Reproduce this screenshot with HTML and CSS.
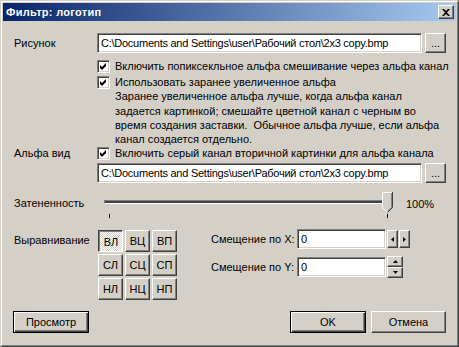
FILE: index.html
```html
<!DOCTYPE html>
<html>
	<head>
		<meta charset="UTF-8">
		<title>Фильтр: логотип</title>
		<link rel="stylesheet" href="styles.css">
	</head>
	<body>
		<div class="window">
			<div class="frame">
				<div class="titlebar">
					<span class="title">Фильтр: логотип</span>
					<span class="close">
						<svg width="8" height="7" viewBox="0 0 8 7"><path d="M0 0h2l2 2 2-2h2l-3 3.5 3 3.5h-2l-2-2-2 2h-2l3-3.5z"/></svg>
					</span>
				</div>

				<div class="content">
					<!-- рисунок -->
					<div class="row">
						<span class="label">Рисунок</span>
						<div class="edit path">C:\Documents and Settings\user\Рабочий стол\2x3 copy.bmp</div>
						<span class="btn browse">...</span>
					</div>

					<div class="check-row first">
						<span class="label"></span>
						<span class="box"><svg width="9" height="9" viewBox="0 0 9 9"><path d="M1 3l2 2 4-4v3l-4 4-2-2z"/></svg></span>
						<span class="check-text">Включить попиксекльное альфа смешивание через альфа канал</span>
					</div>

					<div class="check-row second">
						<span class="label"></span>
						<span class="box"><svg width="9" height="9" viewBox="0 0 9 9"><path d="M1 3l2 2 4-4v3l-4 4-2-2z"/></svg></span>
						<span class="check-text">Использовать заранее увеличенное альфа<br>Заранее увеличенное альфа лучше, когда альфа канал<br>задается картинкой; смешайте цветной канал с черным во<br>время создания заставки.&nbsp; Обычное альфа лучше, если альфа<br>канал создается отдельно.</span>
					</div>

					<!-- альфа вид -->
					<div class="check-row">
						<span class="label">Альфа вид</span>
						<span class="box"><svg width="9" height="9" viewBox="0 0 9 9"><path d="M1 3l2 2 4-4v3l-4 4-2-2z"/></svg></span>
						<span class="check-text">Включить серый канал вторичной картинки для альфа канала</span>
					</div>

					<div class="row second-path">
						<span class="label"></span>
						<div class="edit path">C:\Documents and Settings\user\Рабочий стол\2x3 copy.bmp</div>
						<span class="btn browse">...</span>
					</div>

					<!-- затененность -->
					<div class="slider-row">
						<span class="label">Затененность</span>
						<div class="slider">
							<div class="track"></div>
							<svg class="thumb" width="11" height="21" viewBox="0 0 11 21">
								<path d="M0.5 0.5H10.5V15.5L5.5 20.5L0.5 15.5Z" fill="#d4d0c8"/>
								<path d="M0.5 15.5V0.5H10" stroke="#fff" fill="none"/>
								<path d="M0.5 15.5L5 20" stroke="#fff" fill="none"/>
								<path d="M10.5 0V15.5L5.5 20.5" stroke="#404040" fill="none"/>
								<path d="M9.5 1V15.3L5.5 19.3" stroke="#808080" fill="none"/>
							</svg>
							<span class="mark mark-min"></span>
							<span class="mark mark-max"></span>
						</div>
						<span class="percent">100%</span>
					</div>

					<!-- выравнивание -->
					<div class="align-row">
						<span class="label align-label">Выравнивание</span>
						<div class="align-grid">
							<span class="btn pressed">ВЛ</span>
							<span class="btn">ВЦ</span>
							<span class="btn">ВП</span>
							<span class="btn">СЛ</span>
							<span class="btn">СЦ</span>
							<span class="btn">СП</span>
							<span class="btn">НЛ</span>
							<span class="btn">НЦ</span>
							<span class="btn">НП</span>
						</div>
						<div class="offsets">
							<div class="off-row">
								<span class="off-label">Смещение по X:</span>
								<div class="edit off-edit">0</div>
								<div class="spin-h">
									<span class="btn spin-btn"><svg width="3" height="5" viewBox="0 0 3 5"><path d="M3 0V5L0 2.5Z"/></svg></span>
									<span class="btn spin-btn"><svg width="3" height="5" viewBox="0 0 3 5"><path d="M0 0V5L3 2.5Z"/></svg></span>
								</div>
							</div>
							<div class="off-row">
								<span class="off-label">Смещение по Y:</span>
								<div class="edit off-edit">0</div>
								<div class="spin-v">
									<span class="btn spin-btn"><svg width="5" height="3" viewBox="0 0 5 3"><path d="M0 3H5L2.5 0Z"/></svg></span>
									<span class="btn spin-btn"><svg width="5" height="3" viewBox="0 0 5 3"><path d="M0 0H5L2.5 3Z"/></svg></span>
								</div>
							</div>
						</div>
					</div>

					<!-- кнопки -->
					<div class="buttons">
						<span class="btn default preview">Просмотр</span>
						<span class="btn default ok">OK</span>
						<span class="btn cancel">Отмена</span>
					</div>
				</div>
			</div>
		</div>
	</body>
</html>
```

FILE: styles.css
```css
*{
	margin: 0;
	padding: 0;
	box-sizing: border-box;
}
body{
	font: 11px "Liberation Sans", Arial, sans-serif;
	color: #000;
	background: #d4d0c8;
}
.window{
	width: 459px;
	height: 347px;
	overflow: hidden;
	background: #d4d0c8;
	border: 1px solid;
	border-color: #d4d0c8 #404040 #404040 #d4d0c8;
}
.frame{
	height: 100%;
	border: 1px solid;
	border-color: #fff #808080 #808080 #fff;
	padding: 1px;
}
.titlebar{
	height: 18px;
	display: flex;
	align-items: center;
	justify-content: space-between;
	padding: 0 2px 0 3px;
	background: linear-gradient(to right, #0a246a, #a6caf0);
	color: #fff;
	font-weight: bold;
}
.title{
	letter-spacing: 0.3px;
}
.close{
	width: 16px;
	height: 14px;
	display: flex;
	align-items: center;
	justify-content: center;
	background: #d4d0c8;
	border: 1px solid;
	border-color: #fff #404040 #404040 #fff;
	box-shadow: inset -1px -1px #808080;
}
.content{
	padding: 12px 10px 0 11px;
}
.label{
	width: 83px;
	flex: none;
}
.row{
	display: flex;
	align-items: center;
	height: 20px;
}
.second-path{
	margin-top: 3px;
}
.edit{
	height: 20px;
	background: #fff;
	border: 1px solid;
	border-color: #808080 #fff #fff #808080;
	box-shadow: inset 1px 1px #404040, inset -1px -1px #d4d0c8;
	padding-left: 3px;
	line-height: 18px;
	white-space: nowrap;
	overflow: hidden;
}
.path{
	width: 325px;
	letter-spacing: -0.25px;
}
.btn{
	display: flex;
	align-items: center;
	justify-content: center;
	background: #d4d0c8;
	border: 1px solid;
	border-color: #fff #404040 #404040 #fff;
	box-shadow: inset -1px -1px #808080;
}
.browse{
	width: 21px;
	height: 20px;
	margin-left: 3px;
	padding-bottom: 1px;
}
.check-row{
	display: flex;
	align-items: flex-start;
	line-height: 14px;
}
.check-row.first{
	margin-top: 6px;
}
.check-row.second{
	margin-top: 2px;
	line-height: 14.3px;
}
.box{
	width: 13px;
	height: 13px;
	flex: none;
	margin: 1px 5px 0 0;
	display: flex;
	align-items: center;
	justify-content: center;
	background: #fff;
	border: 1px solid;
	border-color: #808080 #fff #fff #808080;
	box-shadow: inset 1px 1px #404040, inset -1px -1px #d4d0c8;
}
.check-text{
	white-space: nowrap;
}
.slider-row{
	display: flex;
	align-items: flex-start;
	margin-top: 9px;
	height: 28px;
	line-height: 20px;
}
.slider-row .label{
	padding-top: 1px;
}
.slider{
	position: relative;
	width: 300px;
	height: 28px;
}
.track{
	position: absolute;
	left: 7px;
	top: 8px;
	width: 288px;
	height: 4px;
	background: #404040;
	border: 1px solid;
	border-color: #808080 #fff #fff #808080;
}
.thumb{
	position: absolute;
	left: 285px;
	top: 0;
}
.mark{
	position: absolute;
	top: 22px;
	width: 1px;
	height: 4px;
	background: #000;
}
.mark-min{
	left: 12px;
}
.mark-max{
	left: 290px;
}
.percent{
	margin-left: 9px;
	padding-top: 2px;
}
.align-row{
	display: flex;
	align-items: flex-start;
	margin-top: 10px;
	height: 70px;
}
.align-label{
	line-height: 14px;
	padding-top: 3px;
}
.align-grid{
	display: grid;
	grid-template-columns: repeat(3, 25px);
	grid-auto-rows: 22px;
	gap: 2px;
	margin-left: 1px;
}
.pressed{
	border-color: #404040 #fff #fff #404040;
	box-shadow: inset 1px 1px #808080;
	background: repeating-conic-gradient(#fff 0 25%, #d4d0c8 0 50%) 0 0 / 2px 2px;
	padding: 1px 0 0 1px;
}
.offsets{
	display: flex;
	flex-direction: column;
	gap: 8px;
	margin: -1px 0 0 34px;
}
.off-row{
	display: flex;
	align-items: center;
	height: 20px;
}
.off-label{
	width: 86px;
}
.off-edit{
	width: 89px;
}
.spin-h{
	display: flex;
	gap: 1px;
	margin-left: 1px;
}
.spin-h .spin-btn{
	width: 11px;
	height: 18px;
}
.spin-v{
	display: flex;
	flex-direction: column;
	margin-left: 1px;
	height: 22px;
}
.spin-v .spin-btn{
	width: 16px;
	height: 11px;
}
.buttons{
	display: flex;
	margin: 11px 0 0 -1px;
}
.buttons .btn{
	height: 22px;
	width: 75px;
}
.default{
	border: 1px solid #000;
	box-shadow: inset 1px 1px #fff, inset -1px -1px #404040, inset -2px -2px #808080;
}
.preview{
	width: 76px !important;
}
.ok{
	margin-left: auto;
	width: 76px !important;
}
.cancel{
	margin-left: 5px;
}
```
